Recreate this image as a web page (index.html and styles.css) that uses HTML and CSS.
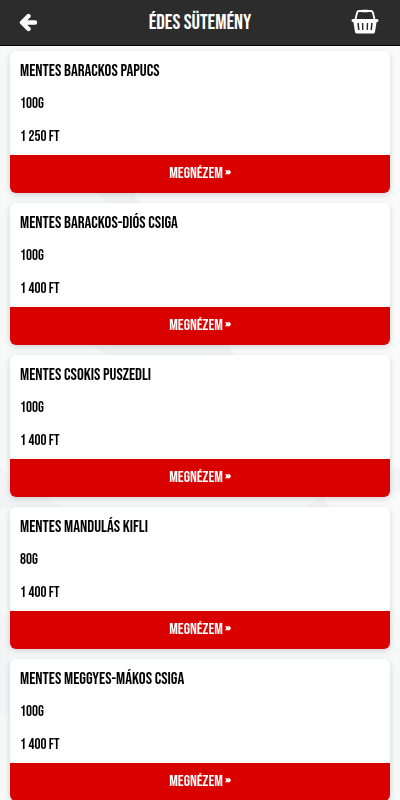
FILE: index.html
```html
<!DOCTYPE html>
<html lang="hu">
<head>
  <meta charset="UTF-8">
  <meta name="viewport" content="width=device-width, initial-scale=1.0">
  <title>Édes sütemény</title>
  <link rel="stylesheet" href="styles.css">
</head>
<body>
  <svg class="backdrop" viewBox="0 0 400 800" preserveAspectRatio="none" aria-hidden="true">
    <path fill="#f7f8f8" d="M0 46H38L139 205L232 355L330 507L400 620V800H0Z"/>
    <path fill="#f2f3f4" d="M90 190H132L141 204H110ZM90 345L226 340L235 356H110ZM0 468L62 507H0ZM305 507L320 496L330 507Z"/>
    <path fill="#f2f4f5" d="M0 610L10 618V715H0ZM390 470L400 467V492H390Z"/>
  </svg>

  <header class="header">
    <a class="header-link" href="#" aria-label="Vissza">
      <svg class="icon-back" viewBox="0 0 20 20" aria-hidden="true">
        <path fill="none" stroke="#fff" stroke-width="4.4" stroke-linecap="round" stroke-linejoin="round" d="M9.5 3L3 9.5L9.5 16M4 9.5H16"/>
      </svg>
    </a>
    <h1>Édes sütemény</h1>
    <a class="header-link basket" href="#" aria-label="Kosár">
      <svg class="icon-basket" viewBox="0 0 28 26" aria-hidden="true">
        <path fill="none" stroke="#fff" stroke-width="1.8" d="M4.5 9L6.2 2.2Q6.6 1 8 1H20Q21.4 1 21.8 2.2L23.5 9"/>
        <path fill="none" stroke="#fff" stroke-width="2.6" stroke-linecap="round" d="M11.5 1H16.5"/>
        <path fill="#fff" fill-rule="evenodd" d="M2 9H26Q27.500 9 27.500 10.500T26 12H25.600L24 22Q23.700 23.600 22 23.600H6Q4.300 23.600 4 22L2.400 12H2Q.5 12 .5 10.500T2 9ZM6.300 13L7 20H8.500L7.900 13ZM10.800 13L11.100 20H12.500L12.300 13ZM15.700 13L15.500 20H16.900L17.200 13ZM20.100 13L19.500 20H21L21.700 13Z"/>
      </svg>
    </a>
  </header>

  <main class="products">
    <article class="product">
      <div class="product-info">
        <h2>Mentes barackos papucs</h2>
        <p>100g</p>
        <p>1 250 Ft</p>
      </div>
      <a class="product-button" href="#">Megnézem <span class="arrows">»</span></a>
    </article>
    <article class="product">
      <div class="product-info">
        <h2>Mentes barackos-diós csiga</h2>
        <p>100g</p>
        <p>1 400 Ft</p>
      </div>
      <a class="product-button" href="#">Megnézem <span class="arrows">»</span></a>
    </article>
    <article class="product">
      <div class="product-info">
        <h2>Mentes csokis puszedli</h2>
        <p>100g</p>
        <p>1 400 Ft</p>
      </div>
      <a class="product-button" href="#">Megnézem <span class="arrows">»</span></a>
    </article>
    <article class="product">
      <div class="product-info">
        <h2>Mentes mandulás kifli</h2>
        <p>80g</p>
        <p>1 400 Ft</p>
      </div>
      <a class="product-button" href="#">Megnézem <span class="arrows">»</span></a>
    </article>
    <article class="product">
      <div class="product-info">
        <h2>Mentes meggyes-mákos csiga</h2>
        <p>100g</p>
        <p>1 400 Ft</p>
      </div>
      <a class="product-button" href="#">Megnézem <span class="arrows">»</span></a>
    </article>
  </main>
</body>
</html>
```

FILE: styles.css
```css
* {
  box-sizing: border-box;
}

body {
  margin: 0;
  height: 100vh;
  display: flex;
  flex-direction: column;
  background-color: #fafafa;
  color: #000;
  font-family: "Bebas Neue", "Liberation Sans Narrow", "Roboto Condensed", "Liberation Sans", sans-serif;
  text-transform: uppercase;
}

h1, h2, p {
  margin: 0;
}

.backdrop {
  position: fixed;
  inset: 0;
  z-index: -1;
  width: 100%;
  height: 100%;
}

.header {
  flex: none;
  display: grid;
  grid-template-columns: 40px 1fr 40px;
  align-items: center;
  height: 46px;
  padding: 0 14px;
  background-color: #2c2c2c;
  border-bottom: 1px solid #000;
  color: #fff;
}

.header h1 {
  font-size: 21px;
  line-height: 24px;
  font-weight: 400;
  text-align: center;
}

.header-link {
  display: flex;
  padding: 0 5px;
}

.basket {
  justify-content: flex-end;
  padding: 0 7px;
}

.icon-back {
  width: 20px;
  height: 20px;
}

.icon-basket {
  flex: none;
  width: 28px;
  height: 26px;
  overflow: visible;
}

.products {
  flex: 1;
  min-height: 0;
  overflow-y: auto;
  scrollbar-width: none;
  padding: 5px 10px 10px;
}

.product {
  margin-bottom: 10px;
  border-radius: 6px;
  overflow: hidden;
  background-color: #fff;
  box-shadow: 0 2px 6px rgba(0, 0, 0, 0.15);
}

.product-info {
  display: grid;
  row-gap: 12px;
  padding: 10px 10px 8px;
}

.product-info h2 {
  font-size: 17px;
  line-height: 20px;
  font-weight: 400;
}

.product-info p {
  font-size: 15px;
  line-height: 21px;
}

.product-button {
  display: block;
  background-color: #d90000;
  color: #fff;
  font-size: 16px;
  line-height: 38px;
  text-align: center;
  text-decoration: none;
}

.arrows {
  font-weight: 700;
}
```
